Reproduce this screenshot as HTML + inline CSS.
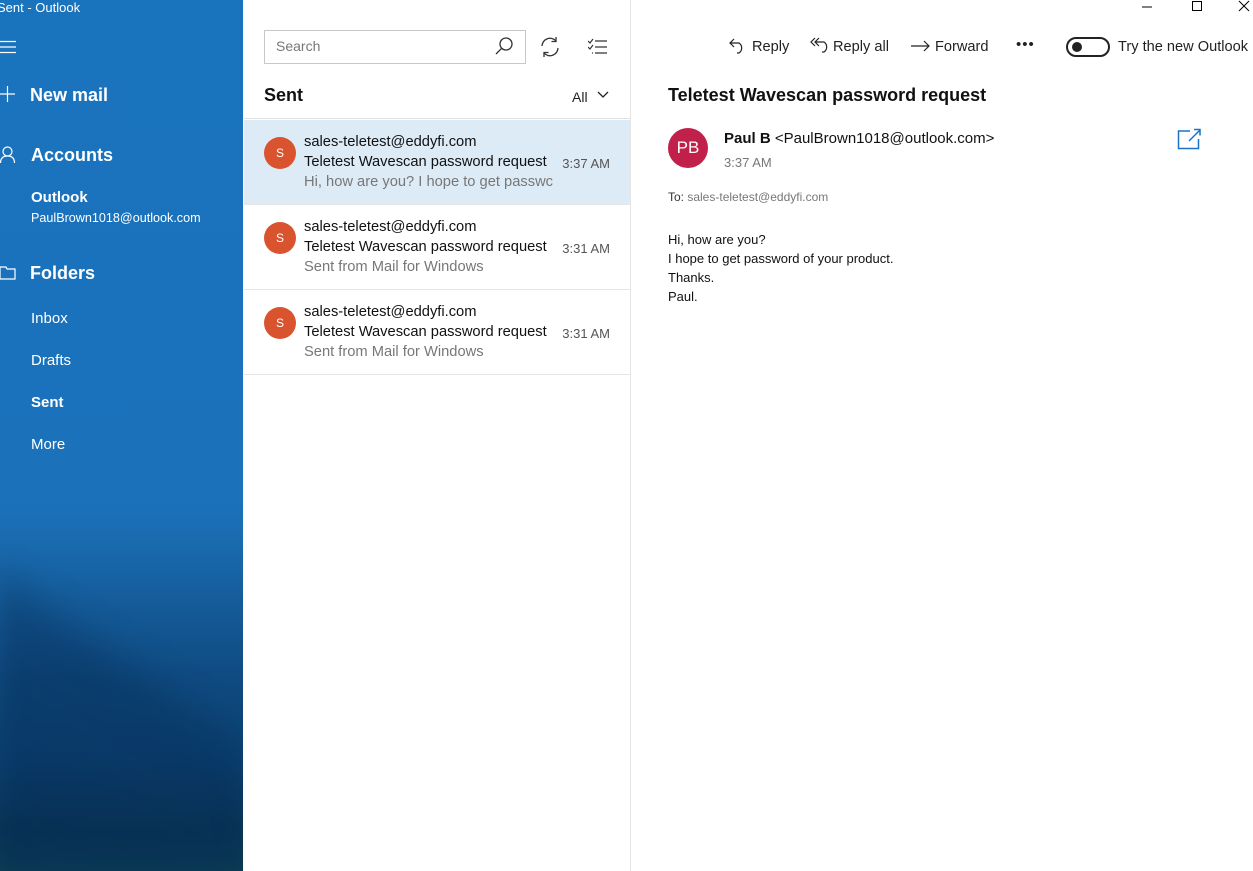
<!DOCTYPE html>
<html><head><meta charset="utf-8"><style>
*{margin:0;padding:0;box-sizing:border-box}
body{width:1253px;height:871px;overflow:hidden;background:#fff;font-family:"Liberation Sans",sans-serif;position:relative;color:#000}
.side{position:absolute;left:0;top:0;width:243px;height:871px;overflow:hidden;
background:linear-gradient(180deg,#1a73bd 0px,#1b72bb 500px,#1a6bb0 540px,#155c9a 600px,#0f4a80 680px,#0c4273 760px,#093658 830px,#0b3d55 871px);color:#fff}
.mtn{position:absolute;left:0;top:520px;width:243px;height:351px;filter:blur(12px);background:linear-gradient(215deg,rgba(4,40,80,0) 0%,rgba(4,40,80,0) 38%,rgba(4,40,80,.35) 48%,rgba(4,40,80,.4) 100%)}
.a{position:absolute;white-space:nowrap}
.hd{font-size:18px;font-weight:bold}
.it{font-size:15px}
.list{position:absolute;left:244px;top:0;width:387px;height:871px;border-right:1px solid #e6e6e6}
.item{position:absolute;left:0;width:386px;height:85px;border-bottom:1px solid #e6e6e6}
.av{position:absolute;left:20px;top:17px;width:32px;height:32px;border-radius:50%;background:#d9532f;color:#fff;font-size:12px;text-align:center;line-height:32px}
.l1,.l2,.l3{position:absolute;left:60px;font-size:14.7px;color:#111}
.l1{top:14px}.l2{top:34px}.l3{top:54px;color:#777}
.tm{position:absolute;right:20px;top:36px;font-size:13px;color:#555}
.tb{font-size:14.6px;color:#222}
</style></head><body>
<div class="side">
<div class="mtn"></div>
<div class="a" style="left:-3px;top:0;font-size:13px">Sent - Outlook</div>
<svg class="a" style="left:0;top:40px" width="16" height="14"><path d="M0 1.5h16M0 7h16M0 12.5h16" stroke="#fff" stroke-width="1.2"/></svg>
<svg class="a" style="left:0;top:86px" width="16" height="16"><path d="M7.5 0v16M0 8h15" stroke="#fff" stroke-width="1.2"/></svg>
<div class="a hd" style="left:30px;top:85px">New mail</div>
<svg class="a" style="left:0;top:146px" width="16" height="18"><circle cx="7.5" cy="5.5" r="4.5" fill="none" stroke="#fff" stroke-width="1.2"/><path d="M0.5 17c0-5 3-7 7-7s7 2 7 7" fill="none" stroke="#fff" stroke-width="1.2"/></svg>
<div class="a hd" style="left:31px;top:145px">Accounts</div>
<div class="a" style="left:31px;top:189px;font-size:15px;font-weight:bold">Outlook</div>
<div class="a" style="left:31px;top:211px;font-size:12.6px">PaulBrown1018@outlook.com</div>
<svg class="a" style="left:0;top:266px" width="16" height="14"><path d="M0 1h6l1 2h8v10H0z" fill="none" stroke="#fff" stroke-width="1.2"/></svg>
<div class="a hd" style="left:30px;top:263px">Folders</div>
<div class="a it" style="left:31px;top:310px">Inbox</div>
<div class="a it" style="left:31px;top:352px">Drafts</div>
<div class="a it" style="left:31px;top:394px;font-weight:bold">Sent</div>
<div class="a it" style="left:31px;top:436px">More</div>
</div>

<div class="list">
<div class="a" style="left:20px;top:30px;width:262px;height:34px;border:1px solid #c8c8c8"></div>
<div class="a" style="left:32px;top:38px;font-size:14px;color:#777">Search</div>
<svg class="a" style="left:250px;top:36px" width="20" height="20"><circle cx="12" cy="8" r="6" fill="none" stroke="#333" stroke-width="1.3"/><path d="M7.8 12.2L2 18" stroke="#333" stroke-width="1.3"/></svg>
<svg class="a" style="left:295px;top:36px" width="22" height="22"><path d="M3 10a8 8 0 0 1 14-5M19 12a8 8 0 0 1-14 5" fill="none" stroke="#333" stroke-width="1.3"/><path d="M17 1v4.5h-4.5M5 21v-4.5h4.5" fill="none" stroke="#333" stroke-width="1.3"/></svg>
<svg class="a" style="left:344px;top:38px" width="20" height="18"><path d="M0 3l2 2 3-4M0 9l2 2 3-4M7 3h12M7 9h12M7 15h12M4 15h1" fill="none" stroke="#333" stroke-width="1.2"/></svg>
<div class="a" style="left:20px;top:85px;font-size:18px;font-weight:bold;color:#111">Sent</div>
<div class="a" style="left:328px;top:89px;font-size:14px;color:#222">All</div>
<svg class="a" style="left:353px;top:91px" width="12" height="8"><path d="M1 1l5 5 5-5" fill="none" stroke="#222" stroke-width="1.3"/></svg>
<div class="a" style="left:0;top:118px;width:386px;height:1px;background:#e0e0e0"></div>
<div class="item" style="top:120px;background:#ddebf7"><div class="av">S</div><div class="l1">sales-teletest@eddyfi.com</div><div class="l2">Teletest Wavescan password request</div><div class="l3">Hi, how are you? I hope to get passwc</div><div class="tm">3:37 AM</div></div>
<div class="item" style="top:205px"><div class="av">S</div><div class="l1">sales-teletest@eddyfi.com</div><div class="l2">Teletest Wavescan password request</div><div class="l3">Sent from Mail for Windows</div><div class="tm">3:31 AM</div></div>
<div class="item" style="top:290px"><div class="av">S</div><div class="l1">sales-teletest@eddyfi.com</div><div class="l2">Teletest Wavescan password request</div><div class="l3">Sent from Mail for Windows</div><div class="tm">3:31 AM</div></div>
</div>

<svg class="a" style="left:1142px;top:0" width="111" height="14"><path d="M0 7h10" stroke="#000"/><rect x="50.5" y="1.5" width="9" height="9" fill="none" stroke="#000"/><path d="M97 1l10 10M107 1l-10 10" stroke="#000"/></svg>
<svg class="a" style="left:729px;top:38px" width="18" height="16"><path d="M5 1L1 5l4 4M1 5h9a6 6 0 0 1 0 10h-2" fill="none" stroke="#222" stroke-width="1.2"/></svg>
<div class="a tb" style="left:752px;top:39px">Reply</div>
<svg class="a" style="left:810px;top:37px" width="22" height="16"><path d="M5 1L1 5l4 4M9 1L5 5l4 4M5 5h9a6 6 0 0 1 0 10h-2" fill="none" stroke="#222" stroke-width="1.2"/></svg>
<div class="a tb" style="left:833px;top:39px">Reply all</div>
<svg class="a" style="left:911px;top:40px" width="20" height="12"><path d="M0 6h18M13 1l5 5-5 5" fill="none" stroke="#222" stroke-width="1.2"/></svg>
<div class="a tb" style="left:935px;top:39px">Forward</div>
<div class="a" style="left:1016px;top:36px;font-size:15px;letter-spacing:1px;color:#222">•••</div>
<div class="a" style="left:1066px;top:37px;width:44px;height:20px;border:2px solid #222;border-radius:10px"><div style="position:absolute;left:4px;top:3px;width:10px;height:10px;border-radius:50%;background:#222"></div></div>
<div class="a tb" style="left:1118px;top:39px">Try the new Outlook</div>

<div class="a" style="left:668px;top:85px;font-size:18px;font-weight:bold;color:#111">Teletest Wavescan password request</div>
<div class="a" style="left:668px;top:128px;width:40px;height:40px;border-radius:50%;background:#c0204a;color:#fff;font-size:17px;text-align:center;line-height:40px">PB</div>
<div class="a" style="left:724px;top:130px;font-size:15px;font-weight:bold;color:#111">Paul B <span style="font-weight:normal">&lt;PaulBrown1018@outlook.com&gt;</span></div>
<div class="a" style="left:724px;top:155px;font-size:13px;color:#777">3:37 AM</div>
<svg class="a" style="left:1177px;top:128px" width="25" height="22"><path d="M13 3H1.5v17.5h20V11" fill="none" stroke="#1a73c8" stroke-width="1.5"/><path d="M12 13L23 2M17 1.5h6v6" fill="none" stroke="#1a73c8" stroke-width="1.5"/></svg>
<div class="a" style="left:668px;top:190px;font-size:12px;color:#333">To: <span style="color:#777">sales-teletest@eddyfi.com</span></div>
<div class="a" style="left:668px;top:230px;font-size:13px;line-height:19px;color:#111">Hi, how are you?<br>I hope to get password of your product.<br>Thanks.<br>Paul.</div>
</body></html>
